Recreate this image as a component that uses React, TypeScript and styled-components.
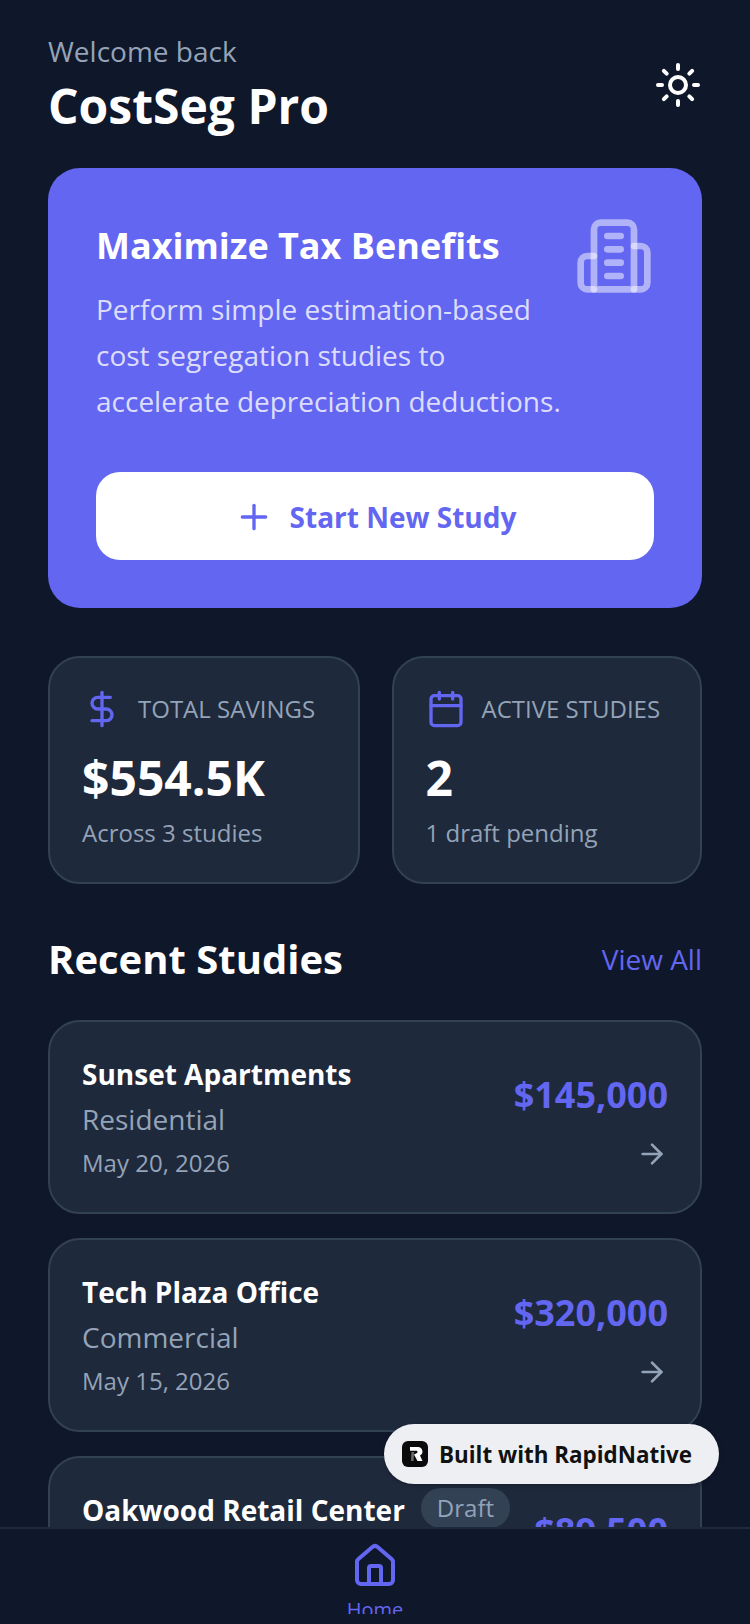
import React from 'react'
import styled, { createGlobalStyle } from 'styled-components'
import { ArrowRight, Calendar, DollarSign, Home, Plus, Sun } from 'lucide-react'

const GlobalStyle = createGlobalStyle`
  html, body {
    margin: 0;
    padding: 0;
    background: #0f172a;
  }
  * {
    box-sizing: border-box;
  }
`

const Screen = styled.div`
  position: relative;
  width: 750px;
  height: 1624px;
  overflow: hidden;
  background: #0f172a;
  font-family: 'Open Sans', 'Noto Sans', sans-serif;
  color: #fff;
`

const Content = styled.div`
  display: flex;
  flex-direction: column;
  padding: 31px 48px 0;
`

const Header = styled.header`
  display: flex;
  align-items: center;
  justify-content: space-between;
  margin-bottom: 30px;
`

const Welcome = styled.div`
  font-size: 28px;
  line-height: 40px;
  color: #94a3b8;
`

const AppTitle = styled.h1`
  margin: 3px 0 0;
  font-size: 48px;
  line-height: 64px;
  font-weight: 700;
`

const ThemeButton = styled.div`
  display: flex;
  color: #fff;
`

const Hero = styled.section`
  background: #6366f1;
  border-radius: 32px;
  padding: 48px;
  margin-bottom: 48px;
`

const HeroTop = styled.div`
  display: flex;
  justify-content: space-between;
  align-items: flex-start;
  margin-bottom: 48px;
`

const HeroText = styled.div`
  width: 480px;
`

const HeroTitle = styled.h2`
  margin: 0 0 10px;
  font-size: 36px;
  line-height: 60px;
  font-weight: 700;
`

const HeroBody = styled.p`
  margin: 0;
  font-size: 28px;
  line-height: 46px;
  color: rgba(255, 255, 255, 0.8);
`

const HeroIcon = styled.svg`
  flex: none;
  fill: none;
  stroke: rgba(255, 255, 255, 0.5);
  stroke-width: 2;
  stroke-linecap: round;
  stroke-linejoin: round;
`

const PrimaryButton = styled.button`
  display: flex;
  align-items: center;
  justify-content: center;
  gap: 16px;
  width: 100%;
  height: 88px;
  padding: 2px 0 0;
  border: 0;
  border-radius: 24px;
  background: #fff;
  color: #6366f1;
  font-family: inherit;
  font-size: 28px;
  font-weight: 700;
`

const StatsRow = styled.div`
  display: grid;
  grid-template-columns: 311.5px 310.5px;
  gap: 32px;
  margin-bottom: 47px;
`

const Card = styled.div`
  background: #1e293b;
  border: 2px solid #334155;
  border-radius: 32px;
`

const StatCard = styled(Card)`
  padding: 31px 32px;
  height: 228px;
`

const StatHead = styled.div`
  display: flex;
  align-items: center;
  gap: 16px;
  margin-bottom: 17px;
  color: #6366f1;
`

const StatLabel = styled.span`
  font-size: 24px;
  line-height: 32px;
  color: #94a3b8;
  text-transform: uppercase;
`

const StatValue = styled.div`
  font-size: 48px;
  line-height: 64px;
  font-weight: 700;
`

const StatNote = styled.div`
  margin-top: 7px;
  font-size: 24px;
  line-height: 32px;
  color: #94a3b8;
`

const SectionHead = styled.div`
  display: flex;
  align-items: center;
  justify-content: space-between;
  margin-bottom: 33px;
`

const SectionTitle = styled.h2`
  margin: 0;
  font-size: 40px;
  line-height: 56px;
  font-weight: 700;
`

const ViewAll = styled.span`
  font-size: 28px;
  line-height: 40px;
  color: #6366f1;
`

const StudyList = styled.div`
  display: flex;
  flex-direction: column;
  gap: 24px;
`

const StudyCard = styled(Card)`
  display: flex;
  justify-content: space-between;
  align-items: center;
  min-height: 194px;
  padding: 0 32px;
`

const StudyName = styled.div`
  display: flex;
  align-items: center;
  gap: 16px;
  margin-bottom: 5px;
  font-size: 28px;
  line-height: 40px;
  font-weight: 700;
`

const DraftBadge = styled.span`
  margin: 1px 0 5px;
  padding: 0 16px;
  border-radius: 20px;
  background: #334155;
  color: #94a3b8;
  font-size: 24px;
  line-height: 40px;
  font-weight: 400;
`

const StudyType = styled.div`
  margin-bottom: 6px;
  font-size: 28px;
  line-height: 40px;
  color: #94a3b8;
`

const StudyDate = styled.div`
  font-size: 24px;
  line-height: 36px;
  color: #94a3b8;
`

const StudySide = styled.div`
  display: flex;
  flex-direction: column;
  align-items: flex-end;
  gap: 19px;
  padding-top: 7px;
  color: #94a3b8;
`

const StudyAmount = styled.div`
  font-size: 36px;
  line-height: 48px;
  font-weight: 700;
  color: #6366f1;
`

const TabBar = styled.nav`
  position: absolute;
  left: 0;
  right: 0;
  top: 1527px;
  height: 97px;
  display: flex;
  justify-content: center;
  background: #0f172a;
  border-top: 2px solid #1e293b;
`

const TabItem = styled.div`
  display: flex;
  flex-direction: column;
  align-items: center;
  height: 85px;
  overflow: hidden;
  padding-top: 13px;
  color: #6366f1;

  svg {
    flex: none;
  }
`

const TabLabel = styled.span`
  flex: none;
  margin-top: 6px;
  font-size: 20px;
  line-height: 28px;
`

const BuiltBadge = styled.div`
  position: absolute;
  left: 384px;
  top: 1424px;
  display: flex;
  align-items: center;
  gap: 11px;
  width: 335px;
  height: 60px;
  padding-left: 18px;
  border-radius: 30px;
  background: #eeeff3;
  color: #111;
  font-size: 22.4px;
  font-weight: 700;
  box-shadow: 0 1px 4px rgba(0, 0, 0, 0.25);
`

const BadgeLogo = styled.svg`
  flex: none;
`

const stats = [
  { label: 'Total Savings', value: '$554.5K', note: 'Across 3 studies', icon: DollarSign },
  { label: 'Active Studies', value: '2', note: '1 draft pending', icon: Calendar },
]

const studies = [
  { name: 'Sunset Apartments', type: 'Residential', date: 'May 20, 2026', amount: '$145,000' },
  { name: 'Tech Plaza Office', type: 'Commercial', date: 'May 15, 2026', amount: '$320,000' },
  { name: 'Oakwood Retail Center', type: 'Retail', date: 'May 10, 2026', amount: '$89,500', draft: true },
]

const App = () => (
  <Screen>
    <GlobalStyle />
    <Content>
      <Header>
        <div>
          <Welcome>Welcome back</Welcome>
          <AppTitle>CostSeg Pro</AppTitle>
        </div>
        <ThemeButton>
          <Sun size={48} />
        </ThemeButton>
      </Header>

      <Hero>
        <HeroTop>
          <HeroText>
            <HeroTitle>Maximize Tax Benefits</HeroTitle>
            <HeroBody>Perform simple estimation-based cost segregation studies to accelerate depreciation deductions.</HeroBody>
          </HeroText>
          <HeroIcon width="80" height="80" viewBox="0 0 24 24">
            <path d="M6 22V4a2 2 0 0 1 2-2h8a2 2 0 0 1 2 2v18Z" />
            <path d="M6 12H4a2 2 0 0 0-2 2v6a2 2 0 0 0 2 2h2" />
            <path d="M18 9h2a2 2 0 0 1 2 2v9a2 2 0 0 1-2 2h-2" />
            <path d="M10 6h4" />
            <path d="M10 10h4" />
            <path d="M10 14h4" />
            <path d="M10 18h4" />
          </HeroIcon>
        </HeroTop>
        <PrimaryButton>
          <Plus size={40} />
          Start New Study
        </PrimaryButton>
      </Hero>

      <StatsRow>
        {stats.map(({ label, value, note, icon: Icon }) => (
          <StatCard key={label}>
            <StatHead>
              <Icon size={40} />
              <StatLabel>{label}</StatLabel>
            </StatHead>
            <StatValue>{value}</StatValue>
            <StatNote>{note}</StatNote>
          </StatCard>
        ))}
      </StatsRow>

      <SectionHead>
        <SectionTitle>Recent Studies</SectionTitle>
        <ViewAll>View All</ViewAll>
      </SectionHead>

      <StudyList>
        {studies.map((study) => (
          <StudyCard key={study.name}>
            <div>
              <StudyName>
                {study.name}
                {study.draft && <DraftBadge>Draft</DraftBadge>}
              </StudyName>
              <StudyType>{study.type}</StudyType>
              <StudyDate>{study.date}</StudyDate>
            </div>
            <StudySide>
              <StudyAmount>{study.amount}</StudyAmount>
              <ArrowRight size={32} />
            </StudySide>
          </StudyCard>
        ))}
      </StudyList>
    </Content>

    <BuiltBadge>
      <BadgeLogo width="26" height="26" viewBox="0 0 26 26">
        <rect width="26" height="26" rx="6" fill="#0b0b0b" />
        <path d="M8 6h8a4.500 4.500 0 0 1 2 8.500L20.500 20h-5l-3.500-6.500 3-1.500a1.200 1.200 0 0 0-.5-2.200H8z" fill="#fff" />
        <path d="M9.500 11H12l-.5 9H9z" fill="#6b6b6b" />
      </BadgeLogo>
      Built with RapidNative
    </BuiltBadge>

    <TabBar>
      <TabItem>
        <Home size={48} />
        <TabLabel>Home</TabLabel>
      </TabItem>
    </TabBar>
  </Screen>
)

export default App
